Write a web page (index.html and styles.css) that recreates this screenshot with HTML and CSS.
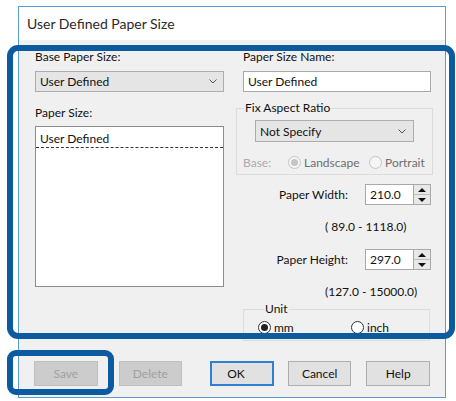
FILE: index.html
```html
<!DOCTYPE html>
<html lang="en">
<head>
    <meta charset="UTF-8">
    <title>User Defined Paper Size</title>
    <link rel="stylesheet" href="styles.css">
</head>
<body>
<div class="window">
    <div class="titlebar">User Defined Paper Size</div>
    <div class="content">
        <div class="columns">
            <div class="col-left">
                <div class="label">Base Paper Size:</div>
                <div class="combo">
                    <span>User Defined</span>
                    <svg class="chev" width="8" height="5" viewBox="0 0 8 5"><polyline points="0.5,0.5 4,4 7.5,0.5" fill="none" stroke="#555" stroke-width="1"/></svg>
                </div>
                <div class="label gap-label">Paper Size:</div>
                <div class="listbox">
                    <div class="list-item">User Defined</div>
                </div>
            </div>
            <div class="col-right">
                <div class="label">Paper Size Name:</div>
                <div class="textbox">User Defined</div>
                <fieldset class="group aspect">
                    <legend>Fix Aspect Ratio</legend>
                    <div class="combo small">
                        <span>Not Specify</span>
                        <svg class="chev" width="8" height="5" viewBox="0 0 8 5"><polyline points="0.5,0.5 4,4 7.5,0.5" fill="none" stroke="#555" stroke-width="1"/></svg>
                    </div>
                    <div class="base-row">
                        <span class="base-label">Base:</span>
                        <span class="opt opt-land"><i class="radio disabled checked"></i>Landscape</span>
                        <span class="opt"><i class="radio disabled"></i>Portrait</span>
                    </div>
                </fieldset>
                <div class="spin-row first">
                    <span class="spin-label">Paper Width:</span>
                    <div class="spin">
                        <div class="spin-value">210.0</div>
                        <div class="spin-buttons"><b class="up"></b><b class="down"></b></div>
                    </div>
                </div>
                <div class="range">( 89.0 - 1118.0)</div>
                <div class="spin-row">
                    <span class="spin-label">Paper Height:</span>
                    <div class="spin">
                        <div class="spin-value">297.0</div>
                        <div class="spin-buttons"><b class="up"></b><b class="down"></b></div>
                    </div>
                </div>
                <div class="range">(127.0 - 15000.0)</div>
                <fieldset class="group unit">
                    <legend>Unit</legend>
                    <div class="unit-row">
                        <span class="opt opt-mm"><i class="radio checked"></i>mm</span>
                        <span class="opt"><i class="radio"></i>inch</span>
                    </div>
                </fieldset>
            </div>
        </div>
        <div class="buttons">
            <button class="btn" disabled>Save</button>
            <button class="btn delete" disabled>Delete</button>
            <button class="btn ok default">OK</button>
            <button class="btn">Cancel</button>
            <button class="btn">Help</button>
        </div>
    </div>
</div>
<div class="mark mark-main"></div>
<div class="mark mark-save"></div>
</body>
</html>
```

FILE: styles.css
```css
html {
    background-color: #fff;
    font-family: Lato, 'Noto Sans', sans-serif;
    font-size: 12px;
    color: #111;
}

body {
    margin: 0;
    position: relative;
    height: 401px;
}

.window {
    box-sizing: border-box;
    width: 428px;
    height: 392px;
    margin: 6px 0 0 18px;
    border: 1px solid #5b9bd5;
    display: flex;
    flex-direction: column;
}

.titlebar {
    height: 33px;
    padding-left: 8px;
    font-size: 14px;
    line-height: 34px;
    color: #2a2a2a;
    background-color: #fff;
}

.content {
    flex: 1 1 auto;
    background-color: #f0f0f0;
    display: flex;
    flex-direction: column;
}

.columns {
    display: flex;
    padding: 9px 0 0 16px;
    gap: 19px;
}

.col-left {
    width: 189px;
    display: flex;
    flex-direction: column;
}

.col-right {
    width: 188px;
    display: flex;
    flex-direction: column;
}

.label {
    height: 16px;
    line-height: 16px;
    white-space: nowrap;
}

.gap-label {
    margin-top: 13px;
}

.combo {
    box-sizing: border-box;
    height: 21px;
    margin-top: 6px;
    padding: 0 6px 0 4px;
    border: 1px solid #adadad;
    background-color: #e5e5e5;
    display: flex;
    align-items: center;
    justify-content: space-between;
    line-height: 19px;
}

.combo.small {
    width: 159px;
    height: 22px;
    margin: 0 0 0 12px;
    padding-right: 7px;
}

.listbox {
    box-sizing: border-box;
    height: 161px;
    margin-top: 5px;
    border: 1px solid #8c8c8c;
    background-color: #fff;
    padding: 3px 0 0 0;
}

.list-item {
    height: 17px;
    line-height: 17px;
    padding-left: 4px;
    border-bottom: 1px dashed #333;
}

.textbox {
    box-sizing: border-box;
    height: 21px;
    margin-top: 6px;
    padding-left: 4px;
    border: 1px solid #a9a9a9;
    background-color: #fff;
    line-height: 19px;
}

.group {
    margin: 0;
    border: 1px solid #dcdcdc;
    min-width: 0;
}

.group legend {
    padding: 0 1px;
    height: 16px;
    line-height: 16px;
}

.aspect {
    margin: 8px -2px 0 -7px;
    padding: 4px 6px 4px 6px;
}

.aspect legend {
    margin-left: 1px;
}

.base-row {
    display: flex;
    align-items: center;
    height: 16px;
    margin-top: 12px;
    color: #6d6d6d;
}

.base-label {
    width: 45px;
    color: #ababab;
}

.opt {
    display: flex;
    align-items: center;
    white-space: nowrap;
}

.opt-land {
    width: 81px;
}

.radio {
    box-sizing: border-box;
    width: 13px;
    height: 13px;
    margin-right: 3px;
    border: 1px solid #333;
    border-radius: 50%;
    background-color: #fff;
    position: relative;
}

.radio.checked::after {
    content: "";
    position: absolute;
    left: 2px;
    top: 2px;
    width: 7px;
    height: 7px;
    border-radius: 50%;
    background-color: #222;
}

.radio.disabled {
    border-color: #c5c5c5;
    background-color: #f5f5f5;
}

.radio.disabled.checked::after {
    background-color: #c5c5c5;
}

.spin-row {
    display: flex;
    justify-content: flex-end;
    align-items: center;
    height: 21px;
    margin-top: 14px;
}

.spin-row.first {
    margin-top: 9px;
}

.spin-label {
    margin-right: 17px;
}

.spin {
    display: flex;
    height: 21px;
}

.spin-value {
    box-sizing: border-box;
    width: 48px;
    padding-left: 4px;
    border: 1px solid #a9a9a9;
    border-right: none;
    background-color: #fff;
    line-height: 19px;
}

.spin-buttons {
    box-sizing: border-box;
    width: 18px;
    border: 1px solid #a9a9a9;
    background-color: #e8e8e8;
    display: flex;
    flex-direction: column;
}

.spin-buttons b {
    flex: 1 1 0;
    display: flex;
    align-items: center;
    justify-content: center;
}

.spin-buttons b.up {
    border-bottom: 1px solid #bdbdbd;
}

.spin-buttons b.up::after {
    content: "";
    border-left: 4px solid transparent;
    border-right: 4px solid transparent;
    border-bottom: 4px solid #111;
}

.spin-buttons b.down::after {
    content: "";
    border-left: 4px solid transparent;
    border-right: 4px solid transparent;
    border-top: 4px solid #111;
}

.range {
    height: 16px;
    line-height: 16px;
    margin-top: 14px;
    padding-left: 82px;
    white-space: nowrap;
}

.range + .spin-row {
    margin-top: 14px;
}

.unit {
    margin: 1px 1px 0 0;
    padding: 3px 0 6px 14px;
}

.unit legend {
    margin-left: 6px;
}

.unit-row {
    display: flex;
    align-items: center;
    height: 14px;
}

.opt-mm {
    width: 93px;
}

.buttons {
    margin-top: auto;
    padding: 0 0 11px 15px;
    display: flex;
}

.btn {
    box-sizing: border-box;
    width: 64px;
    height: 25px;
    margin: 0 15px 0 0;
    padding: 0;
    border: 1px solid #adadad;
    background-color: #e1e1e1;
    font-family: inherit;
    font-size: 12px;
    color: #111;
}

.btn:first-child {
    margin-right: 21px;
}

.btn.delete {
    margin-right: 28px;
}

.btn.ok {
    margin-right: 14px;
}

.btn[disabled] {
    background-color: #cccccc;
    border-color: #bfbfbf;
    color: #a0a0a0;
}

.btn.default {
    border: 2px solid #2f7fd1;
    text-align: left;
    padding-left: 15px;
}

.mark {
    position: absolute;
    box-sizing: border-box;
    border: 6px solid #0c5aa0;
}

.mark-main {
    left: 7px;
    top: 45px;
    width: 448px;
    height: 294px;
    border-radius: 11px;
}

.mark-save {
    left: 7px;
    top: 350px;
    width: 107px;
    height: 45px;
    border-radius: 9px;
}
```
